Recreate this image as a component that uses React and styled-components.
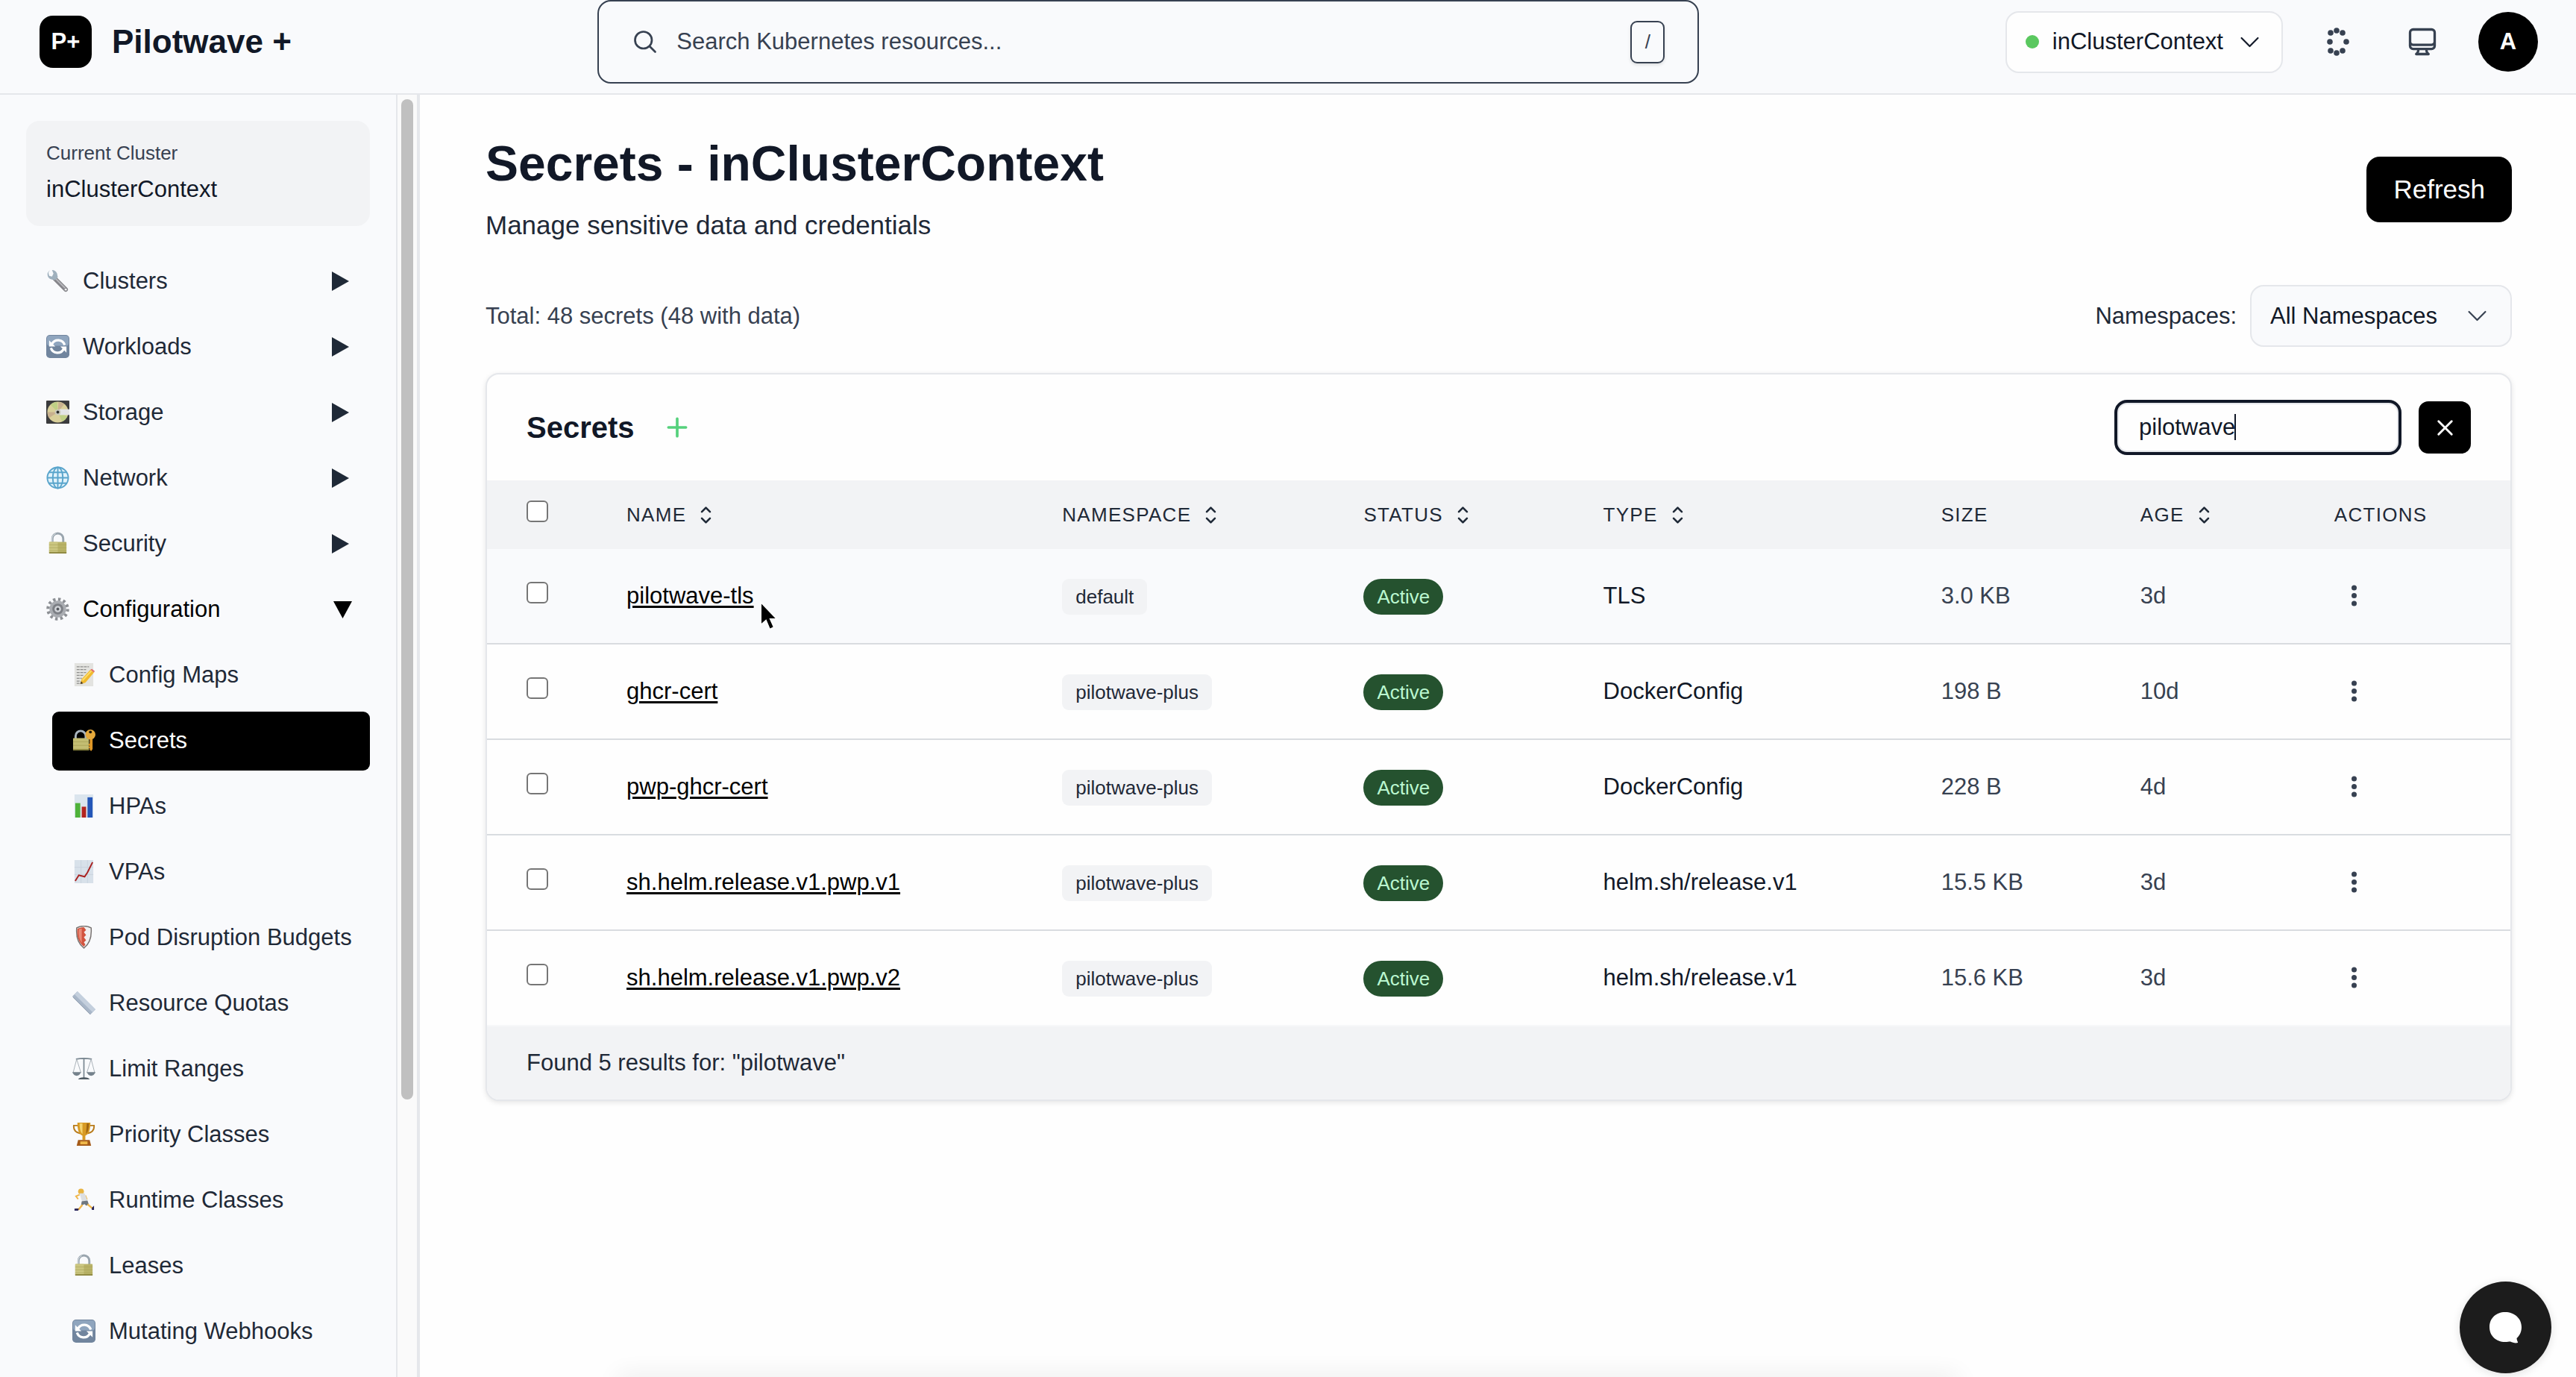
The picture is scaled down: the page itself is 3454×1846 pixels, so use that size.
import React, { useState } from "react";
import styled, { createGlobalStyle } from "styled-components";

const GlobalStyle = createGlobalStyle`
  *, *::before, *::after { box-sizing: border-box; }
  html, body { margin: 0; padding: 0; }
  body {
    font-family: "Liberation Sans", Arial, Helvetica, sans-serif;
    font-size: 31px;
    line-height: 44px;
    color: #111827;
    background: #fefefe;
  }
  button, input, select { font: inherit; color: inherit; margin: 0; }
  button { border: 0; background: none; padding: 0; cursor: pointer; }
  h1, h2, p, ul { margin: 0; padding: 0; }
  ul { list-style: none; }
  svg { display: block; flex: none; }
`;

const Shell = styled.div`
  position: relative;
  display: flex;
  flex-direction: column;
  height: 100vh;
  overflow: hidden;
`;

const Header = styled.header`
  flex: none;
  display: flex;
  align-items: center;
  justify-content: space-between;
  padding: 0 51px 13px 53px;
  background: #f9fafc;
  border-bottom: 2px solid #e5e7eb;
`;

const Brand = styled.a`
  display: flex;
  align-items: center;
  gap: 27px;
  color: #111827;
  text-decoration: none;
  font-size: 44px;
  line-height: 62px;
  font-weight: 700;
`;

const BrandMark = styled.span`
  display: grid;
  place-items: center;
  width: 70px;
  height: 70px;
  border-radius: 18px;
  background: #000;
  color: #fff;
  font-size: 31px;
  line-height: 44px;
`;

const SearchBox = styled.label`
  flex: 0 1 1477px;
  display: flex;
  align-items: center;
  gap: 24px;
  height: 112px;
  padding: 0 44px;
  border: 2px solid #374151;
  border-radius: 18px;
  color: #374151;
`;

const SearchInput = styled.input`
  flex: 1;
  min-width: 0;
  padding: 0;
  border: 0;
  outline: 0;
  background: transparent;
  &::placeholder { color: #374151; opacity: 1; }
`;

const Key = styled.kbd`
  display: grid;
  place-items: center;
  width: 46px;
  height: 57px;
  border: 2px solid #374151;
  border-radius: 9px;
  font-family: inherit;
  font-size: 26px;
  line-height: 35px;
  box-shadow: 0 2px 4px rgba(0, 0, 0, 0.12);
`;

const HeaderActions = styled.div`
  display: flex;
  align-items: center;
  gap: 36px;
`;

const ContextButton = styled.button`
  display: flex;
  align-items: center;
  gap: 18px;
  height: 83px;
  padding: 0 25px;
  border: 2px solid #e5e7eb;
  border-radius: 18px;
  background: #fefefe;
  color: #111827;
`;

const StatusDot = styled.span`
  width: 18px;
  height: 18px;
  border-radius: 50%;
  background: #5ac85f;
`;

const IconButton = styled.button`
  display: grid;
  place-items: center;
  width: 77px;
  height: 77px;
  color: #374151;
`;

const Avatar = styled.button`
  width: 80px;
  height: 80px;
  border-radius: 50%;
  background: #000;
  color: #fff;
  font-weight: 700;
`;

const Body = styled.div`
  flex: 1;
  min-height: 0;
  display: flex;
`;

const Sidebar = styled.aside`
  flex: none;
  display: flex;
  width: 563px;
  background: #f9fafc;
  border-right: 4px solid #e5e7eb;
`;

const SidebarScroll = styled.div`
  flex: 1;
  min-width: 0;
  overflow: hidden;
  padding: 35px;
  border-right: 2px solid #e5e7eb;
`;

const ScrollTrack = styled.div`
  display: flex;
  justify-content: center;
  width: 26px;
  background: #fafafa;
`;

const ScrollThumb = styled.div`
  width: 16px;
  height: 78%;
  margin-top: 6px;
  border-radius: 8px;
  background: #c0c0c0;
`;

const ClusterCard = styled.section`
  height: 141px;
  margin-bottom: 35px;
  padding: 26px 27px;
  border-radius: 18px;
  background: #f2f3f5;
`;

const ClusterLabel = styled.p`
  font-size: 26px;
  line-height: 35px;
  margin-bottom: 9px;
  color: #374151;
`;

const NavList = styled.ul`
  display: flex;
  flex-direction: column;
  gap: 9px;
`;

const SubList = styled(NavList)`
  margin-top: 9px;
  padding-left: 35px;
`;

const NavLink = styled.a`
  display: flex;
  align-items: center;
  gap: 18px;
  height: 79px;
  padding: 0 27px 2px;
  border-radius: 9px;
  text-decoration: none;
  white-space: nowrap;
  color: ${(p) => (p.$active ? "#fff" : "#1f2937")};
  background: ${(p) => (p.$active ? "#000" : "transparent")};
`;

const NavGroup = styled.button`
  display: flex;
  align-items: center;
  gap: 18px;
  width: 100%;
  height: 79px;
  padding: 0 27px 2px;
  text-align: left;
  color: ${(p) => (p.$open ? "#000" : "#1f2937")};
`;

const NavText = styled.span`
  flex: 1;
`;

const Main = styled.main`
  flex: 1;
  min-width: 0;
  padding: 53px 86px 53px 88px;
  background: #fefefe;
`;

const PageHead = styled.div`
  display: flex;
  align-items: center;
  justify-content: space-between;
  margin-bottom: 54px;
`;

const Title = styled.h1`
  font-size: 66px;
  line-height: 78px;
  margin-bottom: 17px;
`;

const Subtitle = styled.p`
  font-size: 35px;
  line-height: 53px;
  color: #1f2937;
`;

const RefreshButton = styled.button`
  height: 88px;
  padding: 0 36px 2px;
  border-radius: 18px;
  background: #000;
  color: #fff;
  font-size: 35px;
  line-height: 53px;
`;

const FilterBar = styled.div`
  display: flex;
  align-items: center;
  justify-content: space-between;
  margin-bottom: 35px;
  color: #374151;
`;

const Field = styled.div`
  display: flex;
  align-items: center;
  gap: 18px;
`;

const FieldLabel = styled.label`
  color: #1f2937;
`;

const SelectWrap = styled.div`
  position: relative;
  width: 351px;
`;

const Select = styled.select`
  appearance: none;
  display: block;
  width: 100%;
  height: 83px;
  padding: 0 70px 0 25px;
  border: 2px solid #e5e7eb;
  border-radius: 18px;
  background: #f9fafc;
  color: #111827;
`;

const SelectIcon = styled.span`
  position: absolute;
  top: 24px;
  right: 29px;
  color: #374151;
  pointer-events: none;
`;

const Card = styled.section`
  border: 2px solid #e5e7eb;
  border-radius: 18px;
  overflow: hidden;
  background: #fefefe;
  box-shadow: 0 2px 7px rgba(0, 0, 0, 0.1);
`;

const CardHead = styled.div`
  display: flex;
  align-items: center;
  justify-content: space-between;
  height: 142px;
  padding: 0 53px;
`;

const CardTitleRow = styled.div`
  display: flex;
  align-items: center;
  gap: 35px;
`;

const CardTitle = styled.h2`
  font-size: 40px;
  line-height: 62px;
`;

const AddButton = styled.button`
  display: grid;
  place-items: center;
  width: 44px;
  height: 44px;
  color: #55d17c;
`;

const FilterRow = styled.div`
  display: flex;
  align-items: center;
  gap: 27px;
`;

const FilterWrap = styled.div`
  position: relative;
`;

const FilterInput = styled.input`
  display: block;
  width: 377px;
  height: 66px;
  padding: 0 27px;
  border: 2px solid #e5e7eb;
  border-radius: 13px;
  outline: 4px solid #111827;
  background: #fefefe;
  caret-color: transparent;
`;

const Caret = styled.span`
  position: absolute;
  top: 15px;
  left: 157px;
  width: 2px;
  height: 35px;
  background: #111827;
`;

const ClearButton = styled.button`
  display: grid;
  place-items: center;
  width: 70px;
  height: 70px;
  border-radius: 13px;
  background: #000;
  color: #fff;
`;

const Table = styled.table`
  width: 100%;
  table-layout: fixed;
  border-collapse: separate;
  border-spacing: 0;
`;

const Col = styled.col`
  width: ${(p) => p.$width}px;
`;

const Th = styled.th`
  height: 92px;
  padding: 0 0 0 53px;
  background: #f2f3f5;
  color: #1f2937;
  font-size: 26px;
  line-height: 35px;
  font-weight: 400;
  letter-spacing: 0.05em;
  text-align: left;
  text-transform: uppercase;
`;

const SortButton = styled.button`
  display: flex;
  align-items: center;
  gap: 9px;
  letter-spacing: inherit;
  text-transform: inherit;
`;

const Row = styled.tr`
  background: ${(p) => (p.$hovered ? "#f9fafc" : "#fefefe")};
  &:last-child td { border-bottom-color: #f7f8f9; }
`;

const Td = styled.td`
  height: 128px;
  padding: 0 0 0 53px;
  border-bottom: 2px solid #d9dce0;
  color: ${(p) => (p.$muted ? "#374151" : "#111827")};
  white-space: nowrap;
`;

const Checkbox = styled.input`
  appearance: none;
  display: block;
  width: 29px;
  height: 29px;
  margin: 0 0 9px;
  border: 2px solid #767676;
  border-radius: 6px;
  background: #fff;
`;

const NameLink = styled.a`
  color: #000;
  text-decoration: underline;
  text-decoration-thickness: 3px;
  text-underline-offset: 3px;
`;

const Badge = styled.span`
  display: inline-flex;
  align-items: center;
  height: 48px;
  margin-top: 2px;
  padding: 0 18px;
  border-radius: ${(p) => (p.$status ? "24px" : "9px")};
  background: ${(p) => (p.$status ? "#25522f" : "#f2f3f5")};
  color: ${(p) => (p.$status ? "#bbf7d0" : "#1f2937")};
  font-size: 26px;
  line-height: 35px;
  vertical-align: middle;
`;

const RowMenu = styled.button`
  display: grid;
  place-items: center;
  width: 53px;
  height: 53px;
  color: #374151;
`;

const CardFoot = styled.div`
  padding: 27px 53px;
  background: #f2f3f5;
  color: #1f2937;
`;

const ChatButton = styled.button`
  position: absolute;
  right: 33px;
  bottom: 5px;
  display: grid;
  place-items: center;
  width: 123px;
  height: 123px;
  border-radius: 50%;
  background: #1c1c1c;
  box-shadow: 0 2px 12px rgba(0, 0, 0, 0.12);
`;

const BottomGlow = styled.div`
  position: absolute;
  left: 24%;
  right: 24%;
  bottom: -12px;
  height: 10px;
  box-shadow: 0 0 32px rgba(0, 0, 0, 0.16);
  pointer-events: none;
`;

const Pointer = styled.svg`
  position: absolute;
  left: 1018px;
  top: 805px;
  pointer-events: none;
`;

function Line({ size, d, width = 1.5 }) {
  return (
    <svg width={size} height={size} viewBox="0 0 24 24" fill="none" stroke="currentColor"
      strokeWidth={width} strokeLinecap="round" strokeLinejoin="round" aria-hidden="true">
      <path d={d} />
    </svg>
  );
}

const CHEVRON = "m19.5 8.25-7.5 7.5-7.5-7.5";
const UP_DOWN = "M8.25 15 12 18.75 15.75 15m-7.5-6L12 5.25 15.75 9";
const MONITOR =
  "M9 17.25v1.007a3 3 0 0 1-.879 2.122L7.5 21h9l-.621-.621A3 3 0 0 1 15 18.257V17.25m6-12V15a2.25 2.25 0 0 1-2.25 2.25H5.25A2.25 2.25 0 0 1 3 15V5.25m18 0A2.25 2.25 0 0 0 18.75 3H5.25A2.25 2.25 0 0 0 3 5.25m18 0V12a2.25 2.25 0 0 1-2.25 2.25H5.25A2.25 2.25 0 0 1 3 12V5.25";
const SEARCH = "m21 21-5.197-5.197m0 0A7.5 7.5 0 1 0 5.196 5.196a7.5 7.5 0 0 0 10.607 10.607Z";

const RING = [[20, 7], [12, 10], [28, 10], [11, 22], [33, 22], [12, 34], [28, 34], [20, 37]];

const lockShape = (
  <>
    <path d="M8.500 16V9.500a7.500 7.500 0 0 1 15 0V16" fill="none" stroke="#9aa5ae" strokeWidth="3" />
    <path d="M8 15V9.500a8 8 0 0 1 5-7" fill="none" stroke="#dde3e8" strokeWidth="1" />
    <rect x="4" y="14" width="24" height="16" rx="1" fill="#b9b368" />
    <rect x="4" y="14" width="12" height="16" rx="1" fill="#cbc680" />
    <rect x="4" y="28" width="24" height="2" fill="#8e8840" />
    <path d="M4 18h24M4 22h24M4 26h24" stroke="#a7a157" strokeWidth="0.600" />
  </>
);

const refreshShape = (
  <>
    <rect width="32" height="32" rx="5" fill="#71859e" />
    <rect x="1" y="1" width="30" height="14" rx="4" fill="#8fa5be" />
    <path d="M8 12.500A9.500 9.500 0 0 1 25.500 14M24 19.500A9.500 9.500 0 0 1 6.500 18" fill="none" stroke="#fff" strokeWidth="3.400" />
    <path d="M4 7.500v8.500h8.500zM28 24.500V16h-8.500z" fill="#fff" />
  </>
);

const GLYPHS = {
  wrench: (
    <>
      <path d="M11 12 27 28" stroke="#85858a" strokeWidth="6" strokeLinecap="round" />
      <path d="M11 11 26 26" stroke="#b8b8bd" strokeWidth="2" />
      <path d="M5 1 2 5c-1 4 1 8 5 9l5 1 4-4-1-5C14 3 11 1 8 1l2 5-2 4-4-1-1-4z" fill="#9fb0bd" />
      <circle cx="27" cy="28" r="1.500" fill="#eee" />
    </>
  ),
  refresh: refreshShape,
  disk: (
    <>
      <rect width="32" height="32" rx="1" fill="#3b3b3d" />
      <circle cx="16" cy="16" r="14.500" fill="#d9cf9a" />
      <path d="M16 16 6 6a14 14 0 0 1 9-4zM16 16l6 13a14 14 0 0 0 7-7z" fill="#bfcf85" />
      <path d="M16 16 17 2a14 14 0 0 1 8 3zM16 16 4 24a14 14 0 0 1-2-8z" fill="#c8b08e" />
      <path d="M18 12h14v8H18z" fill="#e3e4e6" />
      <circle cx="16" cy="16" r="4" fill="#c9c9bd" />
      <circle cx="16" cy="16" r="2" fill="#2a2a2a" />
    </>
  ),
  globe: (
    <>
      <circle cx="16" cy="16" r="14.500" fill="#e2f3fb" />
      <g fill="none" stroke="#5aa5cc" strokeWidth="2">
        <circle cx="16" cy="16" r="14.500" />
        <ellipse cx="16" cy="16" rx="7" ry="14.500" />
        <path d="M16 1.500v29M1.500 16h29M4 8.500h24M4 23.500h24" />
      </g>
    </>
  ),
  lock: lockShape,
  gear: (
    <>
      <circle cx="16" cy="16" r="13.500" fill="none" stroke="#8c8f94" strokeWidth="4.500" strokeDasharray="3.500 3.570" />
      <circle cx="16" cy="16" r="11.500" fill="#a9acb1" />
      <circle cx="16" cy="16" r="7.500" fill="#7c7f85" />
      <circle cx="16" cy="16" r="4.500" fill="#d2d5d9" />
      <circle cx="16" cy="16" r="2" fill="#55585e" />
    </>
  ),
  memo: (
    <>
      <rect x="3" width="26" height="32" fill="#e3e3e0" />
      <path d="M6 5h17M6 9h13M6 13h13M6 17h9M6 21h7M6 25h5M6 28h4" stroke="#8d8d8b" strokeWidth="1.300" strokeDasharray="4 1" />
      <path d="m11 29 2-7L25 9l5 4-12 14z" fill="#f0b92e" />
      <path d="m14 24 13-14" stroke="#fbdc6a" strokeWidth="2" />
      <path d="m25 9 2-1 4 3-1 2z" fill="#e0696a" />
      <path d="m11 29 1-4 3 3z" fill="#4a3b28" />
    </>
  ),
  lockKey: (
    <>
      <path d="M4.500 15V10a7 7 0 0 1 14 0v5" fill="none" stroke="#a9b5bf" strokeWidth="3" />
      <rect x="1" y="13" width="22" height="17" rx="1" fill="#c3bd72" />
      <path d="M1 18h22M1 23h22" stroke="#a49e55" strokeWidth="0.700" />
      <rect x="1" y="28" width="22" height="2" fill="#8e8840" />
      <path d="M24 12h4v16l-2 3-2-2v-2l-2-1 2-2-2-2 2-2z" fill="#df9727" />
      <circle cx="25" cy="8" r="7" fill="#e5a93b" />
      <circle cx="25" cy="4.500" r="2" fill="#1a1408" />
    </>
  ),
  bars: (
    <>
      <rect x="3" width="26" height="32" fill="#dbe5ee" />
      <rect x="4" y="12" width="7" height="20" fill="#4fb23a" />
      <rect x="13" y="17" width="6" height="15" fill="#b3241f" />
      <rect x="21" y="4" width="7" height="28" fill="#2456b8" />
    </>
  ),
  trend: (
    <>
      <rect x="3" width="26" height="32" fill="#d8e1ea" />
      <path d="M3 10h26M3 20h26M12 0v32M21 0v32" stroke="#c6d1dc" strokeWidth="0.800" />
      <path d="m4 29 5-8 8 2 4-6 7-14" fill="none" stroke="#a8201f" strokeWidth="2" />
    </>
  ),
  shield: (
    <>
      <path d="M6 3q10-5 20 0c1 12-1 21-10 28C7 24 5 15 6 3z" fill="#f1f1f1" stroke="#77716f" strokeWidth="1.500" />
      <path d="M7 4q5-2 9-2l3 4-3 3 3 4-3 3 3 4-3 3 2 3-2 3C8 22 6 14 7 4z" fill="#d2543f" />
      <path d="M9 5q2-1 4-1v20C9 18 8 12 9 5z" fill="#e98b78" />
    </>
  ),
  ruler: (
    <>
      <path d="m0 7 7-7 25 25-7 7z" fill="#a8b6c8" />
      <path d="m3 4 4-4 25 25-4 4z" fill="#c4cfdd" />
      <path d="m1 8 24 24" stroke="#8493a6" strokeWidth="1" />
    </>
  ),
  scales: (
    <>
      <path d="M16 2v27M5 3q11-2 22 0" fill="none" stroke="#7b8892" strokeWidth="1.800" />
      <path d="M6 3 1 22M6 3l6 19M26 3l-6 19M26 3l5 19" fill="none" stroke="#a8b1b8" strokeWidth="1" />
      <path d="M0 21h12q-2 5-6 5t-6-5zM20 21h12q-2 5-6 5t-6-5z" fill="#75828c" />
      <path d="M8 31q1-3 8-3t8 3z" fill="#4f5a63" />
    </>
  ),
  trophy: (
    <>
      <path d="M9 4H2q-1 9 9 11M23 4h7q1 9-9 11" fill="none" stroke="#b97c1c" strokeWidth="2" />
      <path d="M7 0h18c0 10-2 16-7 18v6h-4v-6C9 16 7 10 7 0z" fill="#d79a24" />
      <path d="M10 1h4v15c-3-3-4-8-4-15z" fill="#f5d471" />
      <path d="M20 1h3c0 6-1 11-4 15z" fill="#9c6412" />
      <path d="M8 24h16l2 8H6z" fill="#a55a18" />
      <rect x="11" y="26" width="10" height="4" fill="#efb84a" />
    </>
  ),
  runner: (
    <>
      <circle cx="12" cy="4.500" r="4" fill="#e9b443" />
      <path d="M10 9 5 11l3 4M18 10l2 5-3 3" fill="none" stroke="#f0b64a" strokeWidth="2" />
      <path d="M10 7h7l4 10-7 3z" fill="#dcdfe3" />
      <path d="m13 18 8-1 2 6-4 1-2-2-5 2z" fill="#6f7780" />
      <path d="m14 23-5 6H5M21 22l7 6" fill="none" stroke="#f0b64a" strokeWidth="2.400" />
      <path d="M3 28h6l-1 3H3zM27 27l3-3v6h-3z" fill="#25235a" />
    </>
  ),
};

function Glyph({ name }) {
  return (
    <svg width="31" height="31" viewBox="0 0 32 32" aria-hidden="true">
      {GLYPHS[name]}
    </svg>
  );
}

function Disclosure({ open }) {
  return (
    <svg width="24" height="26" viewBox="0 0 24 26" fill="currentColor" overflow="visible" aria-hidden="true">
      <path d={open ? "M2 2h25L14.500 25z" : "M0 0 23 13 0 26z"} />
    </svg>
  );
}

const GROUPS = [
  ["wrench", "Clusters"],
  ["refresh", "Workloads"],
  ["disk", "Storage"],
  ["globe", "Network"],
  ["lock", "Security"],
  ["gear", "Configuration"],
];

const CONFIG_LINKS = [
  ["memo", "Config Maps"],
  ["lockKey", "Secrets"],
  ["bars", "HPAs"],
  ["trend", "VPAs"],
  ["shield", "Pod Disruption Budgets"],
  ["ruler", "Resource Quotas"],
  ["scales", "Limit Ranges"],
  ["trophy", "Priority Classes"],
  ["runner", "Runtime Classes"],
  ["lock", "Leases"],
  ["refresh", "Mutating Webhooks"],
];

const COLUMNS = [
  { label: "Name", width: 584, sortable: true },
  { label: "Namespace", width: 404, sortable: true },
  { label: "Status", width: 321, sortable: true },
  { label: "Type", width: 453, sortable: true },
  { label: "Size", width: 267 },
  { label: "Age", width: 260, sortable: true },
  { label: "Actions", width: 289 },
];

const SECRETS = [
  { name: "pilotwave-tls", namespace: "default", type: "TLS", size: "3.0 KB", age: "3d" },
  { name: "ghcr-cert", namespace: "pilotwave-plus", type: "DockerConfig", size: "198 B", age: "10d" },
  { name: "pwp-ghcr-cert", namespace: "pilotwave-plus", type: "DockerConfig", size: "228 B", age: "4d" },
  { name: "sh.helm.release.v1.pwp.v1", namespace: "pilotwave-plus", type: "helm.sh/release.v1", size: "15.5 KB", age: "3d" },
  { name: "sh.helm.release.v1.pwp.v2", namespace: "pilotwave-plus", type: "helm.sh/release.v1", size: "15.6 KB", age: "3d" },
];

function TopBar() {
  return (
    <Header>
      <Brand href="#home">
        <BrandMark>P+</BrandMark>
        Pilotwave +
      </Brand>
      <SearchBox>
        <Line size={36} d={SEARCH} width={1.8} />
        <SearchInput type="text" aria-label="Search Kubernetes resources" placeholder="Search Kubernetes resources..." />
        <Key>/</Key>
      </SearchBox>
      <HeaderActions>
        <ContextButton type="button">
          <StatusDot />
          inClusterContext
          <Line size={35} d={CHEVRON} />
        </ContextButton>
        <IconButton type="button" aria-label="Activity">
          <svg width="44" height="44" viewBox="0 0 44 44" fill="currentColor" aria-hidden="true">
            {RING.map(([x, y]) => <circle key={`${x}-${y}`} cx={x} cy={y} r="3.800" />)}
          </svg>
        </IconButton>
        <IconButton type="button" aria-label="Display theme">
          <Line size={44} d={MONITOR} width={1.8} />
        </IconButton>
        <Avatar type="button" aria-label="Account">A</Avatar>
      </HeaderActions>
    </Header>
  );
}

function SideNav() {
  return (
    <Sidebar>
      <SidebarScroll>
        <ClusterCard>
          <ClusterLabel>Current Cluster</ClusterLabel>
          <p>inClusterContext</p>
        </ClusterCard>
        <nav aria-label="Resources">
          <NavList>
            {GROUPS.map(([icon, label]) => {
              const open = label === "Configuration";
              return (
                <li key={label}>
                  <NavGroup type="button" $open={open} aria-expanded={open}>
                    <Glyph name={icon} />
                    <NavText>{label}</NavText>
                    <Disclosure open={open} />
                  </NavGroup>
                  {open && (
                    <SubList>
                      {CONFIG_LINKS.map(([subIcon, subLabel]) => (
                        <li key={subLabel}>
                          <NavLink href="#resource" $active={subLabel === "Secrets"}>
                            <Glyph name={subIcon} />
                            {subLabel}
                          </NavLink>
                        </li>
                      ))}
                    </SubList>
                  )}
                </li>
              );
            })}
          </NavList>
        </nav>
      </SidebarScroll>
      <ScrollTrack>
        <ScrollThumb />
      </ScrollTrack>
    </Sidebar>
  );
}

function SecretsTable() {
  return (
    <Table>
      <colgroup>
        <Col $width={134} />
        {COLUMNS.map((c) => <Col key={c.label} $width={c.width} />)}
      </colgroup>
      <thead>
        <tr>
          <Th><Checkbox type="checkbox" aria-label="Select all secrets" /></Th>
          {COLUMNS.map((c) => (
            <Th key={c.label} scope="col">
              {c.sortable ? (
                <SortButton type="button">
                  {c.label}
                  <Line size={35} d={UP_DOWN} width={1.8} />
                </SortButton>
              ) : c.label}
            </Th>
          ))}
        </tr>
      </thead>
      <tbody>
        {SECRETS.map((s, i) => (
          <Row key={s.name} $hovered={i === 0}>
            <Td><Checkbox type="checkbox" aria-label={`Select ${s.name}`} /></Td>
            <Td><NameLink href="#secret">{s.name}</NameLink></Td>
            <Td><Badge>{s.namespace}</Badge></Td>
            <Td><Badge $status>Active</Badge></Td>
            <Td>{s.type}</Td>
            <Td $muted>{s.size}</Td>
            <Td $muted>{s.age}</Td>
            <Td>
              <RowMenu type="button" aria-label={`Actions for ${s.name}`}>
                <svg width="35" height="35" viewBox="0 0 35 35" fill="currentColor" aria-hidden="true">
                  <circle cx="17.500" cy="6" r="3.500" />
                  <circle cx="17.500" cy="16.500" r="3.500" />
                  <circle cx="17.500" cy="27" r="3.500" />
                </svg>
              </RowMenu>
            </Td>
          </Row>
        ))}
      </tbody>
    </Table>
  );
}

export default function App() {
  const [query, setQuery] = useState("pilotwave");
  return (
    <>
      <GlobalStyle />
      <Shell>
        <TopBar />
        <Body>
          <SideNav />
          <Main>
            <PageHead>
              <div>
                <Title>Secrets - inClusterContext</Title>
                <Subtitle>Manage sensitive data and credentials</Subtitle>
              </div>
              <RefreshButton type="button">Refresh</RefreshButton>
            </PageHead>
            <FilterBar>
              <p>Total: 48 secrets (48 with data)</p>
              <Field>
                <FieldLabel htmlFor="namespaces">Namespaces:</FieldLabel>
                <SelectWrap>
                  <Select id="namespaces" defaultValue="all">
                    <option value="all">All Namespaces</option>
                  </Select>
                  <SelectIcon><Line size={35} d={CHEVRON} /></SelectIcon>
                </SelectWrap>
              </Field>
            </FilterBar>
            <Card>
              <CardHead>
                <CardTitleRow>
                  <CardTitle>Secrets</CardTitle>
                  <AddButton type="button" aria-label="Create secret">
                    <Line size={40} d="M12 5v14M5 12h14" width={2.2} />
                  </AddButton>
                </CardTitleRow>
                <FilterRow>
                  <FilterWrap>
                    <FilterInput type="text" aria-label="Filter secrets" value={query}
                      onChange={(e) => setQuery(e.target.value)} />
                    <Caret />
                  </FilterWrap>
                  <ClearButton type="button" aria-label="Clear filter" onClick={() => setQuery("")}>
                    <Line size={35} d="M6 18 18 6M6 6l12 12" width={2} />
                  </ClearButton>
                </FilterRow>
              </CardHead>
              <SecretsTable />
              <CardFoot>Found 5 results for: "{query}"</CardFoot>
            </Card>
          </Main>
        </Body>
        <BottomGlow />
        <ChatButton type="button" aria-label="Open chat">
          <svg width="46" height="44" viewBox="0 0 46 44" fill="#fff" aria-hidden="true">
            <path d="M22 1C10 1 1 9 1 21s9 20 21 20c3 0 5-.500 7-.500 3 1.500 7 2.500 10 1.500.500-1-1.500-3-1.500-6C42 32 44 27 44 21 44 9 34 1 22 1z" />
          </svg>
        </ChatButton>
        <Pointer width="26" height="42" viewBox="0 0 26 42" aria-hidden="true">
          <path d="M2 2v31l7-6 5 12 6-3-5-11h9z" fill="#000" stroke="#fff" strokeWidth="2" />
        </Pointer>
      </Shell>
    </>
  );
}
